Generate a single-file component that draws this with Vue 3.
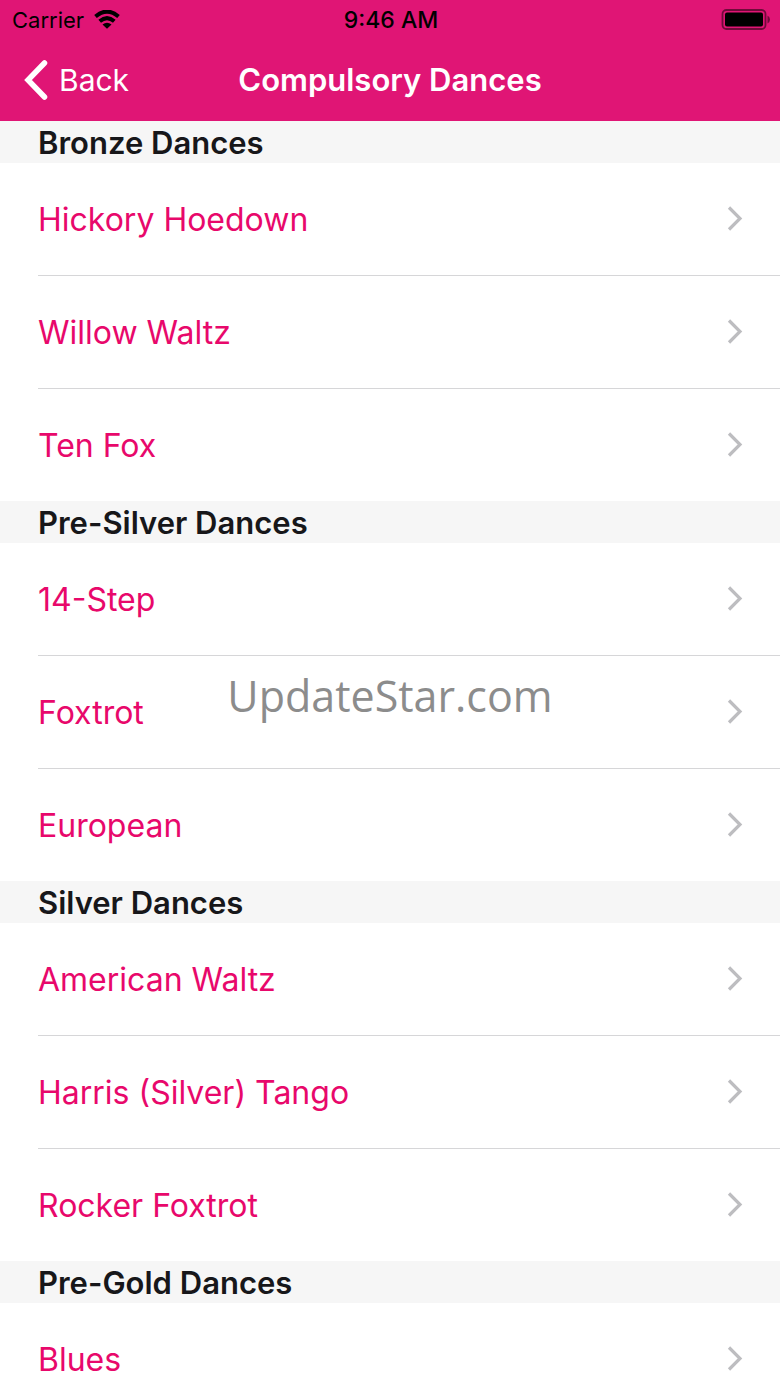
<script setup>
const sections = [
  { title: 'Bronze Dances', dances: ['Hickory Hoedown', 'Willow Waltz', 'Ten Fox'] },
  { title: 'Pre-Silver Dances', dances: ['14-Step', 'Foxtrot', 'European'] },
  { title: 'Silver Dances', dances: ['American Waltz', 'Harris (Silver) Tango', 'Rocker Foxtrot'] },
  { title: 'Pre-Gold Dances', dances: ['Blues'] },
]
</script>

<template>
  <div class="app">
    <header class="header">
      <div class="status">
        <span class="carrier">Carrier
          <svg width="26" height="20" viewBox="0 0 26 20" aria-hidden="true">
            <g fill="none" stroke="#000" stroke-width="4">
              <path d="M1.500 6.500Q13-3.300 24.500 6.500" />
              <path d="M5.700 11.300Q13 5 20.300 11.300" />
            </g>
            <path d="M8.500 14.500Q13 10.800 17.500 14.500L13 18.800Z" />
          </svg>
        </span>
        <time class="time">9:46 AM</time>
        <svg class="battery" width="49" height="22" viewBox="0 0 49 22" aria-hidden="true">
          <rect x="1.500" y="1" width="43" height="19" rx="4" fill="none" stroke="#000" stroke-opacity=".5" stroke-width="1.800" />
          <rect x="4" y="3.500" width="38" height="14" rx="2" />
          <path d="M46.500 6.500Q49 8 49 10.500T46.500 14.500Z" fill-opacity=".5" />
        </svg>
      </div>
      <nav class="nav">
        <button class="back" type="button">
          <svg width="24" height="40" viewBox="0 0 24 40" aria-hidden="true">
            <path d="M20.500 3L4 20L20.500 37" fill="none" stroke="#fff" stroke-width="5.500" stroke-linecap="round" />
          </svg>
          Back
        </button>
        <h1>Compulsory Dances</h1>
      </nav>
    </header>
    <main>
      <section v-for="section in sections" :key="section.title">
        <h2>{{ section.title }}</h2>
        <ul>
          <li v-for="dance in section.dances" :key="dance">
            <a href="#">
              {{ dance }}
              <svg width="16" height="26" viewBox="0 0 16 26" aria-hidden="true">
                <path d="M2 1.500L13 12.500L2 23.500" fill="none" stroke="#bdbdc0" stroke-width="3.200" />
              </svg>
            </a>
          </li>
        </ul>
      </section>
    </main>
    <div class="watermark">UpdateStar.com</div>
  </div>
</template>

<style>
body { background: #fff; }
</style>

<style scoped>
.app {
  position: relative;
  display: flex;
  flex-direction: column;
  height: 100vh;
  font-family: Inter, sans-serif;
}
.header { flex: none; background: #e01575; }
main { flex: 1; min-height: 0; overflow-y: auto; scrollbar-width: none; }
.status, .nav {
  display: grid;
  grid-template-columns: 1fr auto 1fr;
  align-items: center;
}
.status { height: 40px; padding: 0 10px 0 12px; font-size: 22px; }
.carrier { display: flex; align-items: center; gap: 10px; }
.time { font-size: 23px; font-weight: 500; }
.battery { justify-self: end; }
.nav { box-sizing: border-box; height: 81px; padding: 0 24px 2px; }
.back {
  justify-self: start;
  display: flex;
  align-items: center;
  gap: 11px;
  padding: 0;
  border: 0;
  background: none;
  color: #fff;
  font: 30px Inter, sans-serif;
}
h1 { margin: 0; color: #fff; font-size: 31px; font-weight: 600; }
h2 {
  margin: 0;
  padding: 2px 0 0 38px;
  background: #f6f6f6;
  color: #17171a;
  font-size: 31px;
  font-weight: 600;
  line-height: 40px;
}
ul { margin: 0; padding: 0 0 0 38px; list-style: none; }
li + li { border-top: 1px solid #d6d6d8; }
a {
  display: flex;
  align-items: center;
  justify-content: space-between;
  height: 112px;
  padding-right: 37px;
  color: #e8086b;
  font-size: 32px;
  text-decoration: none;
}
.watermark {
  position: absolute;
  top: 50%;
  left: 50%;
  transform: translate(-50%, -50%);
  padding-top: 4px;
  color: #8c8c8c;
  font: 43px/54px "Open Sans", sans-serif;
  pointer-events: none;
}
</style>
